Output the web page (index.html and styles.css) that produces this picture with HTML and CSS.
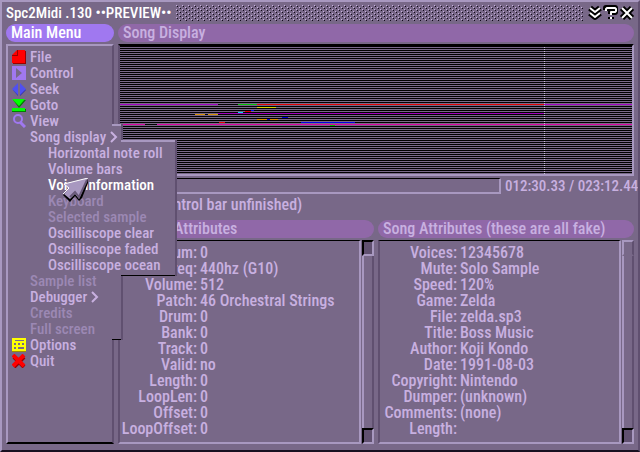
FILE: index.html
```
<!DOCTYPE html>
<html lang="en">
<head>
<meta charset="utf-8">
<title>Spc2Midi</title>
<link rel="stylesheet" href="styles.css">
</head>
<body>
<div class="window">
  <header class="titlebar">
    <h1 class="title">Spc2Midi .130 ••PREVIEW••</h1>
    <div class="grip"></div>
    <div class="tools">
      <button aria-label="Minimize"><svg viewBox="0 0 14 14"><path class="halo" d="M2 2l5 4 5-4M2 7l5 4 5-4"/><path class="stroke" d="M2 2l5 4 5-4M2 7l5 4 5-4"/></svg></button>
      <button aria-label="Help"><svg viewBox="0 0 14 14"><path class="halo" d="M2 4V2h9v4H7v2M7 11v2"/><path class="stroke" d="M2 5V3l1-1h8l1 1v2l-1 1H7v3M7 11v2"/></svg></button>
      <button aria-label="Close"><svg viewBox="0 0 14 14"><path class="halo" d="M2 2l10 10M12 2L2 12"/><path class="stroke" d="M2 2l10 10M12 2L2 12"/></svg></button>
    </div>
  </header>
  <div class="columns">
    <nav class="side">
      <h2 class="pill active">Main Menu</h2>
      <ul class="menu">
        <li><button><svg viewBox="0 0 14 14"><path fill="#900" d="M5 1h9v13H1V6z"/><path fill="#f00" d="M6 0h7v13H0V6h6z"/><path fill="#f00" d="M0 5L5 0v5z"/><path fill="none" stroke="#900" d="M0 5.500h5.500V0"/></svg>File</button></li>
        <li><button><svg viewBox="0 0 14 14"><path fill="#a078f0" fill-rule="evenodd" d="M0 0h14v14H0zM4 2v10l6-5z"/></svg>Control</button></li>
        <li><button><svg viewBox="0 0 14 14"><path fill="#3030a8" d="M6 2v12L1 8zM8 2v12l6-6z"/><path fill="#5050f0" d="M6 1v12L0 7zM8 1v12l6-6z"/></svg>Seek</button></li>
        <li><button><svg viewBox="0 0 14 14"><path fill="#008000" d="M1 2h13L7 10zM0 11h14v3H0z"/><path fill="#0f0" d="M0 1h13L7 8zM0 10h13v3H0z"/></svg>Goto</button></li>
        <li><button><svg viewBox="0 0 14 14"><circle cx="6" cy="5" r="4" fill="none" stroke="#a078f0" stroke-width="2"/><path stroke="#a078f0" stroke-width="3" d="M8 8l5 5"/></svg>View</button>
          <ul class="flyout">
            <li><button>Song display <svg class="arrow" viewBox="0 0 8 12"><path d="M1 1l5 5-5 5"/></svg></button>
              <ul class="flyout deep">
                <li><button>Horizontal note roll</button></li>
                <li><button>Volume bars</button></li>
                <li><button class="current">Voice information</button></li>
                <li><button disabled>Keyboard</button></li>
                <li><button disabled>Selected sample</button></li>
                <li><button>Oscilliscope clear</button></li>
                <li><button>Oscilliscope faded</button></li>
                <li><button>Oscilliscope ocean</button></li>
              </ul>
            </li>
            <li><button disabled>Sample list</button></li>
            <li><button>Debugger <svg class="arrow" viewBox="0 0 8 12"><path d="M1 1l5 5-5 5"/></svg></button></li>
            <li><button disabled>Credits</button></li>
            <li><button disabled>Full screen</button></li>
          </ul>
        </li>
        <li><button><svg viewBox="0 0 14 14"><path fill="#ff0" fill-rule="evenodd" d="M0 0h14v13H0zM3 2v1h9V2zM2 5v2h2V5zM6 5v2h2V5zM10 5v2h2V5zM2 9v2h2V9zM6 9v2h6V9z"/><path fill="#a09000" d="M0 13h14v1H0z"/></svg>Options</button></li>
        <li><button><svg viewBox="0 0 14 14"><path stroke="#900" stroke-width="4" d="M2 3l10 10M12 3L2 13"/><path stroke="#f00" stroke-width="4" d="M1 1l11 11M12 1L1 12"/></svg>Quit</button></li>
      </ul>
    </nav>
    <main class="main">
      <h2 class="pill">Song Display</h2>
      <div class="display">
        <svg viewBox="0 0 512 128" preserveAspectRatio="none" shape-rendering="crispEdges">
          <path fill="#a000c0" d="M0 58h98v1H0zM424 58h88v1h-88zM98 67h326v1H98z"/>
          <path fill="#00c000" d="M118 58h19v1h-19zM210 79h5v1h-5z"/>
          <path fill="#e00000" d="M137 58h287v1H137zM125 65h6v1h-6zM99 76h6v1h-6z"/>
          <path fill="#d8d800" d="M137 61h19v1h-19z"/>
          <path fill="#00d8e8" d="M118 66h5v1h-5z"/>
          <path fill="#0000e0" d="M131 64h3v1h-3zM162 71h6v1h-6zM147 73h3v1h-3zM181 76h54v1h-54z"/>
          <path fill="#d89000" d="M75 68h10v1H75zM88 68h10v1H88zM137 73h10v1h-10zM150 73h8v1h-8z"/>
          <path fill="#d800a0" d="M0 78h25v1H0zM37 78h475v1H37z"/>
          <path fill="#000" d="M25 78h12v1H25zM98 58h20v1H98z"/>
          <path stroke="#c8c0d8" stroke-dasharray="1 1" d="M424.500 1v127"/>
        </svg>
      </div>
      <div class="transport">
        <div class="progress" role="progressbar" aria-label="Position"></div>
        <div class="time">012:30.33 / 023:12.44</div>
      </div>
      <p class="note">(control bar unfinished)</p>
      <div class="panels">
        <section class="panel">
          <h2 class="pill">Sample Attributes</h2>
          <div class="pane">
            <div class="sheet">
              <table>
                <tr><th scope="row">Num:</th><td>0</td></tr>
                <tr><th scope="row">Freq:</th><td>440hz (G10)</td></tr>
                <tr><th scope="row">Volume:</th><td>512</td></tr>
                <tr><th scope="row">Patch:</th><td>46 Orchestral Strings</td></tr>
                <tr><th scope="row">Drum:</th><td>0</td></tr>
                <tr><th scope="row">Bank:</th><td>0</td></tr>
                <tr><th scope="row">Track:</th><td>0</td></tr>
                <tr><th scope="row">Valid:</th><td>no</td></tr>
                <tr><th scope="row">Length:</th><td>0</td></tr>
                <tr><th scope="row">LoopLen:</th><td>0</td></tr>
                <tr><th scope="row">Offset:</th><td>0</td></tr>
                <tr><th scope="row">LoopOffset:</th><td>0</td></tr>
              </table>
            </div>
            <div class="scroll"><button aria-label="Scroll up"></button><button aria-label="Scroll down"></button></div>
          </div>
        </section>
        <section class="panel">
          <h2 class="pill">Song Attributes (these are all fake)</h2>
          <div class="pane">
            <div class="sheet">
              <table>
                <tr><th scope="row">Voices:</th><td>12345678</td></tr>
                <tr><th scope="row">Mute:</th><td>Solo Sample</td></tr>
                <tr><th scope="row">Speed:</th><td>120%</td></tr>
                <tr><th scope="row">Game:</th><td>Zelda</td></tr>
                <tr><th scope="row">File:</th><td>zelda.sp3</td></tr>
                <tr><th scope="row">Title:</th><td>Boss Music</td></tr>
                <tr><th scope="row">Author:</th><td>Koji Kondo</td></tr>
                <tr><th scope="row">Date:</th><td>1991-08-03</td></tr>
                <tr><th scope="row">Copyright:</th><td>Nintendo</td></tr>
                <tr><th scope="row">Dumper:</th><td>(unknown)</td></tr>
                <tr><th scope="row">Comments:</th><td>(none)</td></tr>
                <tr><th scope="row">Length:</th><td></td></tr>
              </table>
            </div>
            <div class="scroll plain"><button aria-label="Scroll up"></button><button aria-label="Scroll down"></button></div>
          </div>
        </section>
      </div>
    </main>
  </div>
  <svg class="pointer" viewBox="0 0 26 25"><path fill="#000" d="M25 1v4l-6 15-3 3-4-5-5 6-7-7 5-5z"/><path fill="#a898c0" d="M25 0L16 21l-4-5-5 5-6-5 5-6-5-4z"/><path fill="none" stroke="#685878" stroke-width="2" d="M24 2l-8 17-4-5-5 5"/><path fill="none" stroke="#fff" d="M25 0L1 6l5 4-6 6"/></svg>
</div>
</body>
</html>
```
FILE: styles.css
```
:root {
  --face: #786888;
  --text: #c8b0e0;
  --light: #a898c0;
  --shade: #605070;
  --dim: #9c88b4;
}
* { box-sizing: border-box; margin: 0; padding: 0; }
body {
  background: var(--face);
  color: var(--text);
  font: 500 16px/16px "Roboto Condensed", Roboto, "Liberation Sans", sans-serif;
}
button {
  font: inherit;
  color: inherit;
  background: none;
  border: 0;
  white-space: nowrap;
}
ul { list-style: none; }
.window {
  position: relative;
  display: flex;
  flex-direction: column;
  min-height: 100vh;
  padding: 0 4px 6px;
  overflow: hidden;
  border: 2px solid;
  border-color: var(--light) var(--shade) #181020 var(--light);
}
.titlebar {
  display: flex;
  align-items: center;
  gap: 4px;
  height: 22px;
}
.title {
  color: #fff;
  font: inherit;
  font-size: 15px;
  white-space: nowrap;
}
.grip {
  flex: 1;
  height: 16px;
  background:
    conic-gradient(from 270deg at 1px 1px, var(--text) 90deg, transparent 0) 0 0 / 6px 4px,
    conic-gradient(from 270deg at 1px 1px, #100818 90deg, transparent 0) 1px 1px / 6px 4px,
    conic-gradient(from 270deg at 1px 1px, var(--text) 90deg, transparent 0) 3px 2px / 6px 4px,
    conic-gradient(from 270deg at 1px 1px, #100818 90deg, transparent 0) 4px 3px / 6px 4px;
}
.tools { display: flex; gap: 2px; }
.tools button, .tools svg { display: block; width: 14px; height: 14px; overflow: visible; }
.tools path { fill: none; stroke-linejoin: round; }
.halo { stroke: #000; stroke-width: 6; }
.stroke { stroke: #fff; stroke-width: 2; }
.columns {
  flex: 1;
  display: grid;
  grid-template-columns: 108px minmax(0, 1fr);
  gap: 4px;
}
.side, .main, .panel { display: flex; flex-direction: column; min-width: 0; gap: 2px; }
.side { position: relative; z-index: 1; }
.pill {
  height: 18px;
  padding: 0 5px;
  border-radius: 9px;
  background: #9068a8;
  font: inherit;
  line-height: 18px;
  white-space: nowrap;
}
.active { background: #a078f0; color: #fff; }
.menu {
  flex: 1;
  padding: 3px 0 0 4px;
  border: 2px solid;
  border-color: var(--light) var(--shade) #000 var(--light);
  font-size: 15px;
}
.menu button {
  display: flex;
  align-items: center;
  gap: 4px;
  height: 16px;
}
.menu svg { width: 14px; height: 14px; }
.menu .arrow { width: 8px; height: 12px; fill: none; stroke: var(--text); stroke-width: 2; }
.flyout {
  margin: -5px -11px -3px 0;
  padding: 5px 0 3px 18px;
  border-right: 2px solid var(--shade);
  background:
    linear-gradient(var(--light), var(--light)) right top / 9px 2px no-repeat,
    linear-gradient(#000, #000) right bottom / 9px 1px no-repeat,
    linear-gradient(var(--face), var(--face)) right / 11px 100% no-repeat;
}
.deep {
  margin-right: -56px;
  background:
    linear-gradient(var(--light), var(--light)) right top / 54px 2px no-repeat,
    linear-gradient(#000, #000) right bottom / 54px 1px no-repeat,
    linear-gradient(var(--face), var(--face)) right / 56px 100% no-repeat;
}
button:disabled { color: var(--dim); }
.current { color: #fff; }
.display {
  height: 132px;
  border: 2px solid;
  border-color: #000 var(--light) var(--light) var(--shade);
  background: repeating-linear-gradient(#000 0 1px, var(--face) 1px 2px) padding-box;
}
.display svg { display: block; width: 100%; height: 100%; }
.transport { display: flex; gap: 4px; height: 16px; }
.progress {
  flex: 1;
  border: 2px solid;
  border-width: 1px 2px 2px;
  border-color: #000 var(--light) var(--light) var(--shade);
}
.time { width: 129px; font-size: 15px; white-space: nowrap; }
.note { padding: 1px 0 4px 35px; height: 22px; }
.panels {
  flex: 1;
  display: grid;
  grid-template-columns: repeat(2, minmax(0, 1fr));
  gap: 4px;
}
.pane { flex: 1; display: flex; gap: 1px; }
.sheet {
  flex: 1;
  min-width: 0;
  overflow: hidden;
  padding-top: 4px;
  border: 2px solid;
  border-width: 1px 2px 2px;
  border-color: #000 var(--light) var(--light) var(--shade);
}
table { border-spacing: 0; }
th, td { height: 16px; white-space: nowrap; text-align: left; }
th { width: 77px; text-align: right; font-weight: inherit; }
td { padding-left: 3px; }
.scroll {
  display: flex;
  flex-direction: column;
  justify-content: space-between;
  width: 12px;
  background: linear-gradient(90deg, var(--light) 2px, var(--face) 2px 10px, var(--shade) 10px);
}
.scroll button {
  height: 16px;
  background: var(--shade);
  border: 2px solid;
  border-color: #000 var(--light) var(--light) #000;
}
.plain button:first-child {
  background: var(--face);
  border-color: var(--light) var(--shade) var(--face) var(--light);
}
.pointer {
  position: absolute;
  z-index: 2;
  left: 61px;
  top: 176px;
  width: 26px;
  height: 25px;
}
```
